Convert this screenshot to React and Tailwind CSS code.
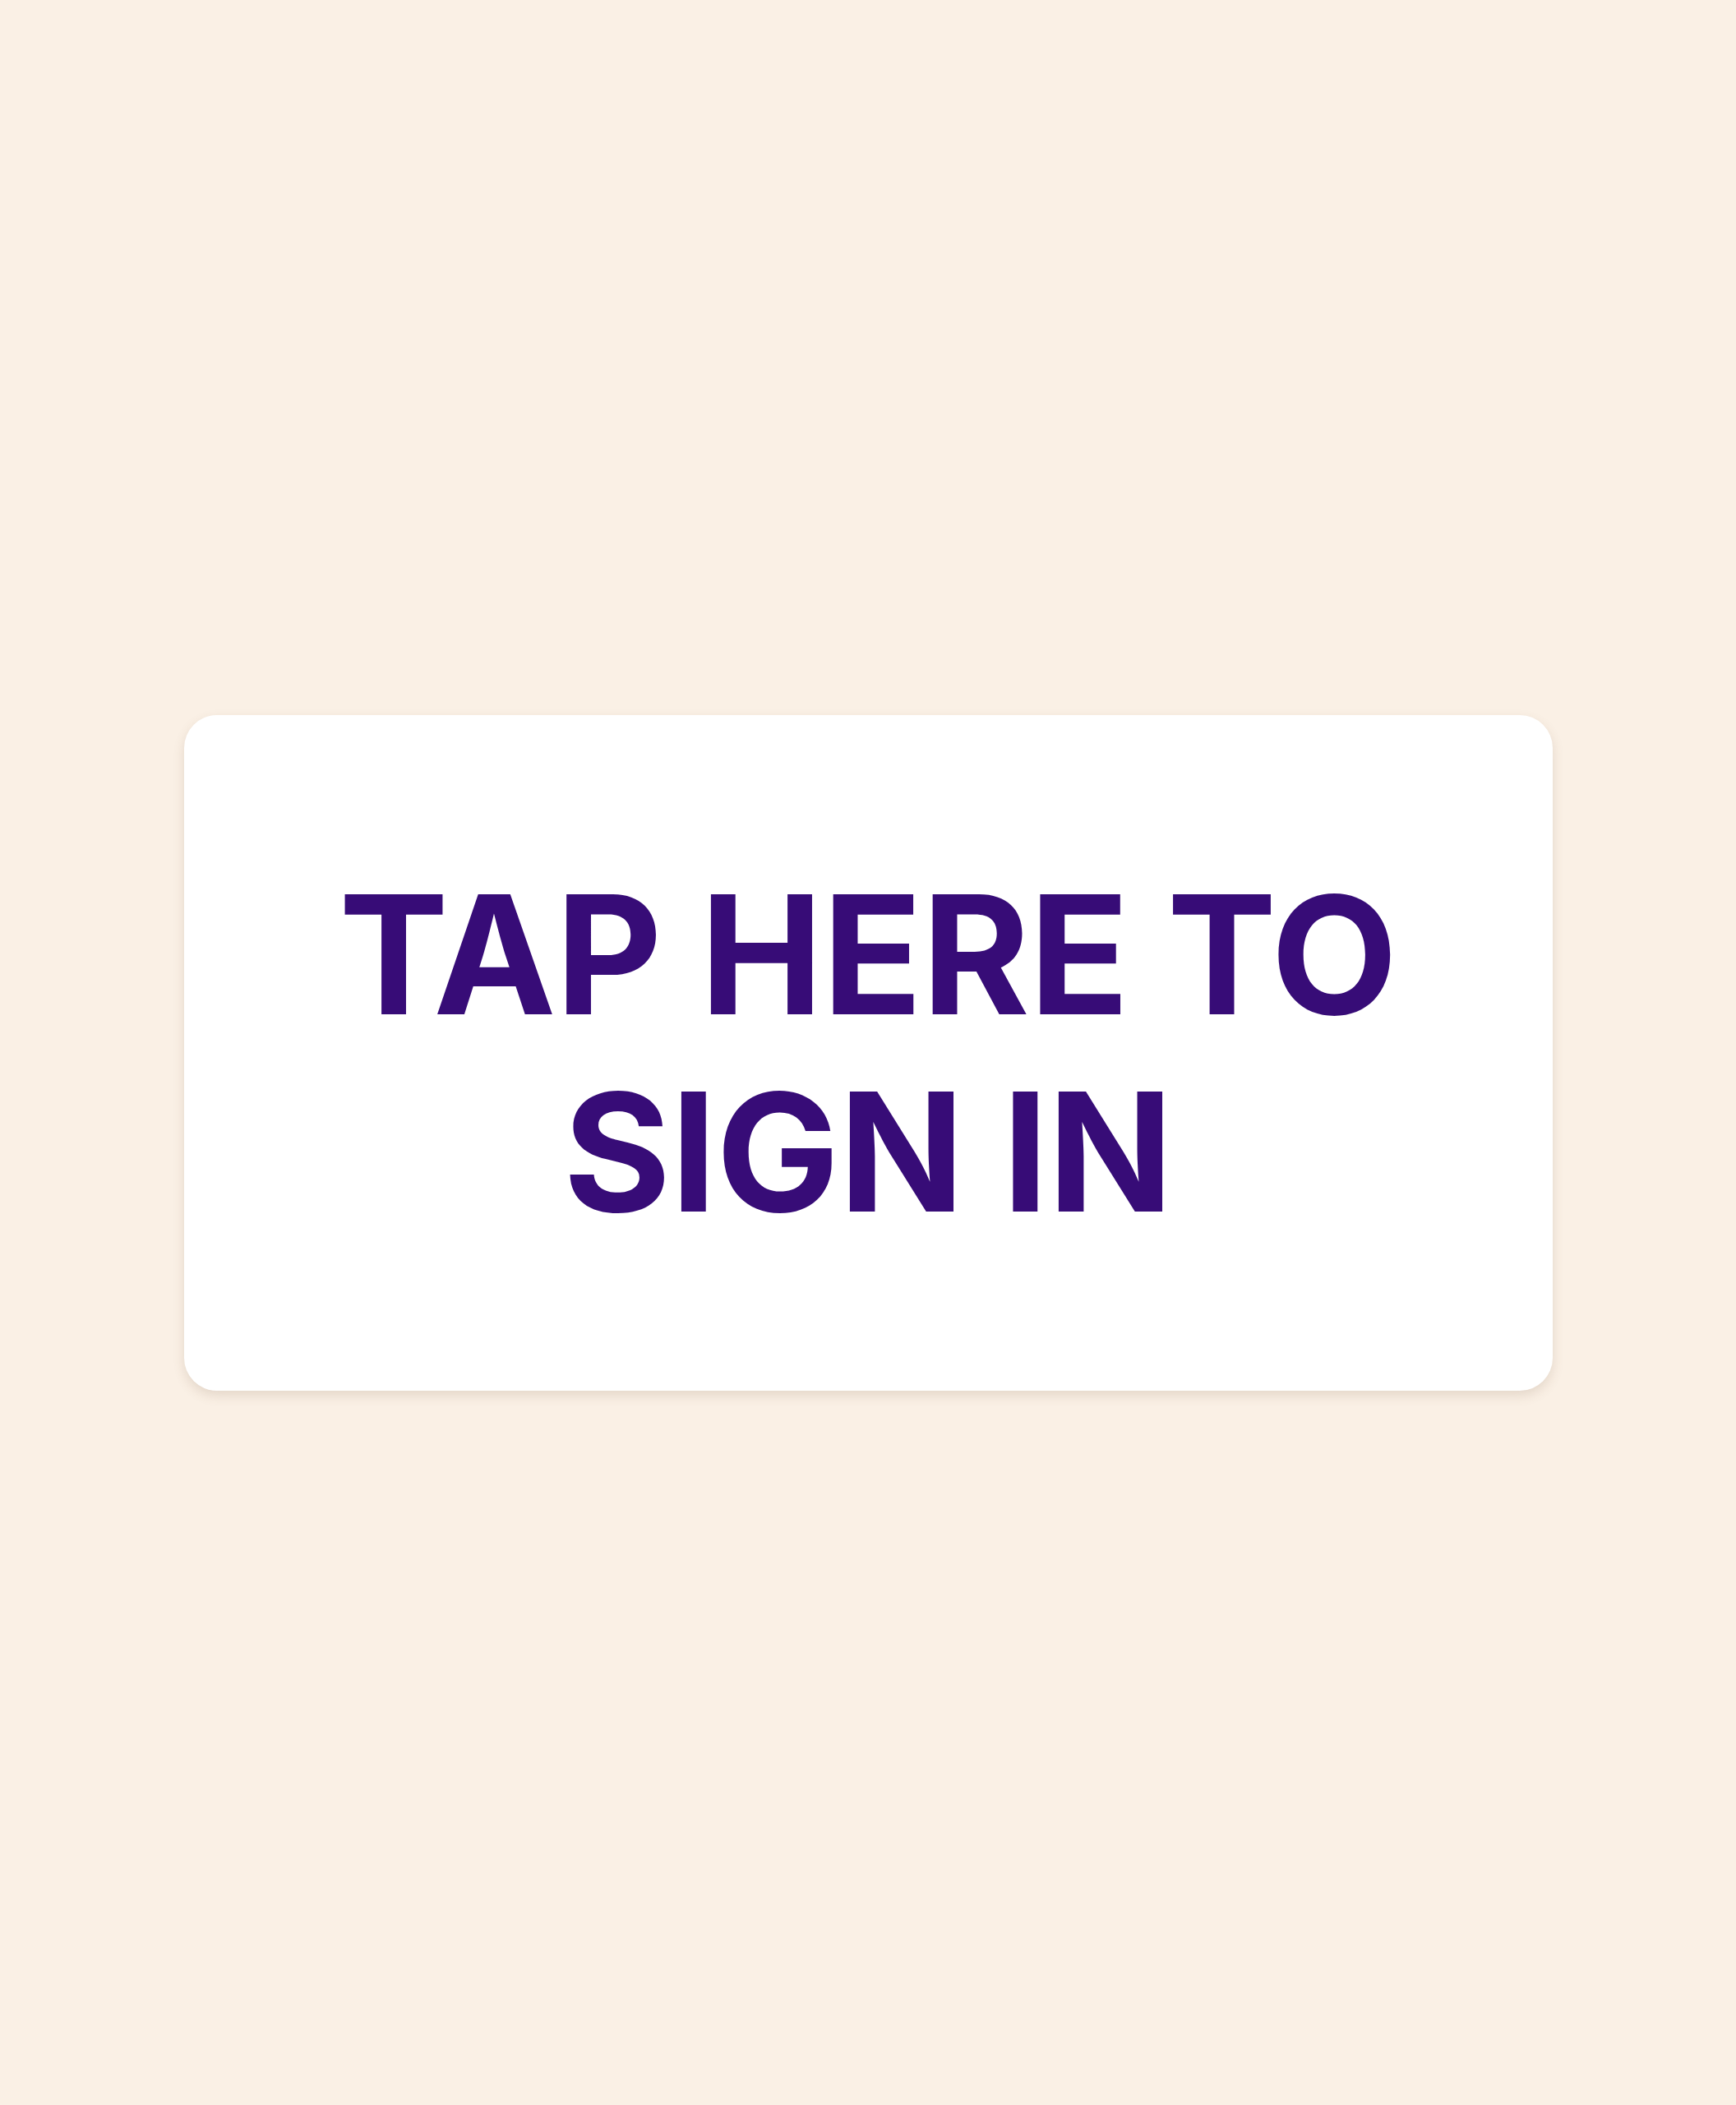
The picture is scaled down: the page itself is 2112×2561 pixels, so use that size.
export default function App() {
  return (
    <div className="min-h-screen bg-[#faf0e5] flex items-center justify-center">
      <button
        className="w-[1665px] h-[822px] bg-white rounded-[40px] shadow-[0_6px_14px_rgba(120,90,60,0.16)] flex items-center justify-center"
      >
        <span
          className="text-[200px] leading-[240px] font-bold tracking-[-0.6px] text-[#370c77] text-center"
          style={{ fontFamily: 'Inter, "Noto Sans", sans-serif' }}
        >
          TAP HERE TO
          <br />
          SIGN IN
        </span>
      </button>
    </div>
  )
}
